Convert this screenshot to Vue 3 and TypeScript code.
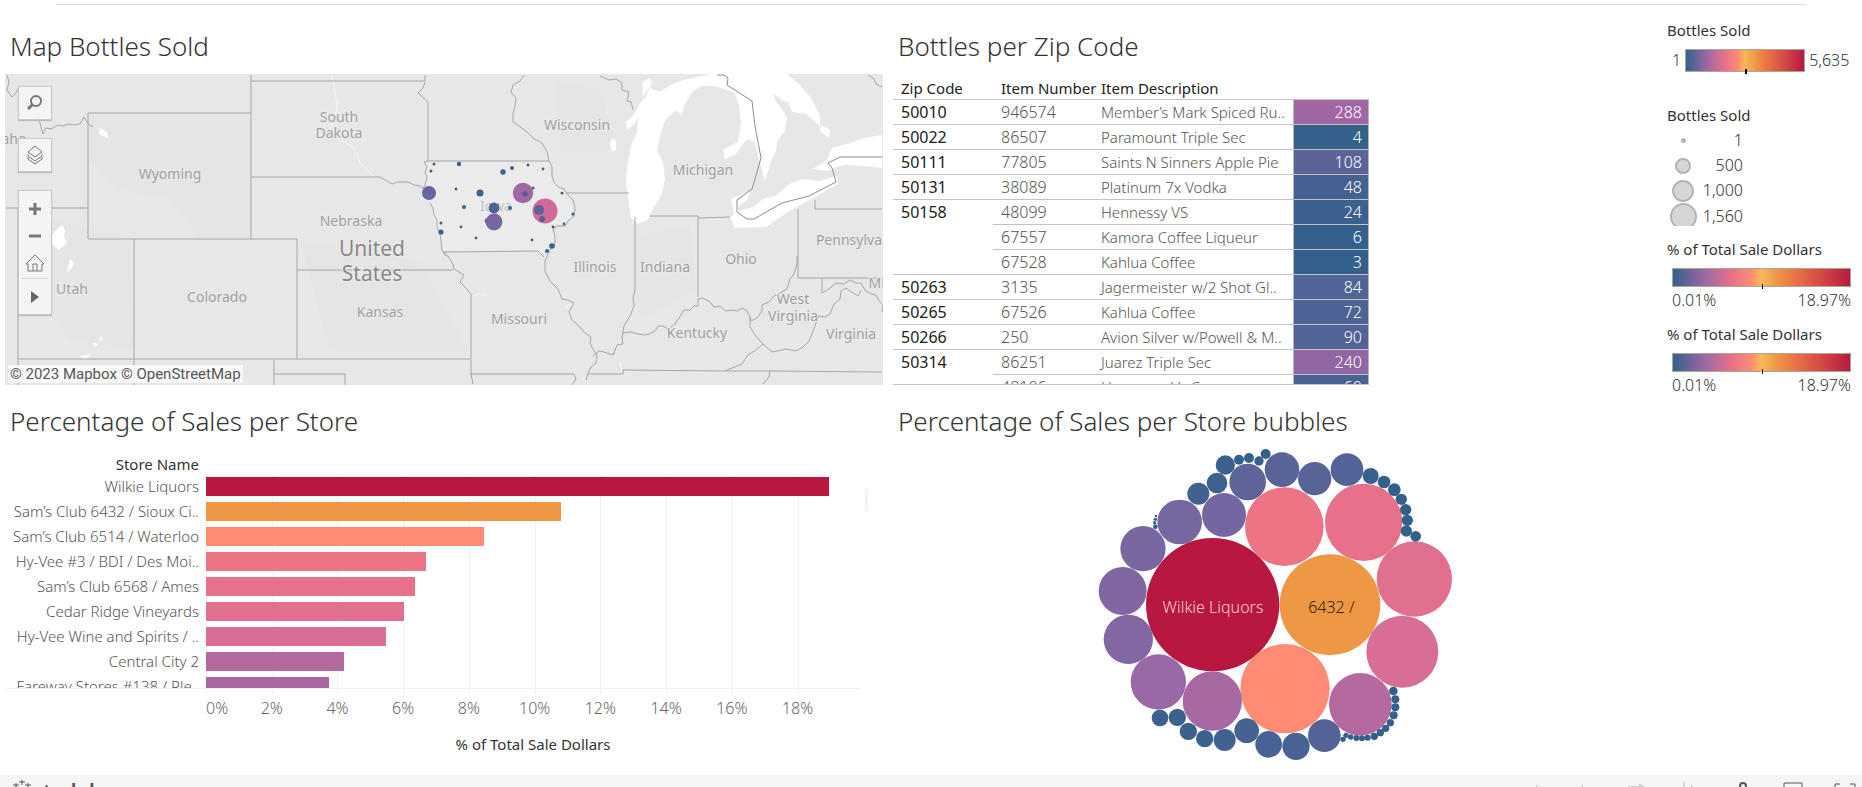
<script setup lang="ts">
interface ZipRow {
  zip?: string
  span?: number
  item: string
  description: string
  bottles: number
  color: string
}

const zipRows: ZipRow[] = [
  { zip: '50010', item: '946574', description: 'Member’s Mark Spiced Ru..', bottles: 288, color: '#a167a4' },
  { zip: '50022', item: '86507', description: 'Paramount Triple Sec', bottles: 4, color: '#34608c' },
  { zip: '50111', item: '77805', description: 'Saints N Sinners Apple Pie', bottles: 108, color: '#5b6499' },
  { zip: '50131', item: '38089', description: 'Platinum 7x Vodka', bottles: 48, color: '#446192' },
  { zip: '50158', span: 3, item: '48099', description: 'Hennessy VS', bottles: 24, color: '#3b618e' },
  { item: '67557', description: 'Kamora Coffee Liqueur', bottles: 6, color: '#34608c' },
  { item: '67528', description: 'Kahlua Coffee', bottles: 3, color: '#34608c' },
  { zip: '50263', item: '3135', description: 'Jagermeister w/2 Shot Gl..', bottles: 84, color: '#526397' },
  { zip: '50265', item: '67526', description: 'Kahlua Coffee', bottles: 72, color: '#4d6295' },
  { zip: '50266', item: '250', description: 'Avion Silver w/Powell & M..', bottles: 90, color: '#546397' },
  { zip: '50314', span: 2, item: '86251', description: 'Juarez Triple Sec', bottles: 240, color: '#9067a4' },
  { item: '48106', description: 'Hennessy Vs Cognac', bottles: 60, color: '#486294' },
]

interface Store {
  name: string
  share: number
  color: string
}

const axisMax = 19.9
const stores: Store[] = [
  { name: 'Wilkie Liquors', share: 18.97, color: '#b8173f' },
  { name: 'Sam’s Club 6432 / Sioux Ci..', share: 10.8, color: '#ee9845' },
  { name: 'Sam’s Club 6514 / Waterloo', share: 8.46, color: '#ff8b74' },
  { name: 'Hy-Vee #3 / BDI / Des Moi..', share: 6.7, color: '#ed7485' },
  { name: 'Sam’s Club 6568 / Ames', share: 6.36, color: '#e7718a' },
  { name: 'Cedar Ridge Vineyards', share: 6.02, color: '#e1708e' },
  { name: 'Hy-Vee Wine and Spirits / ..', share: 5.48, color: '#d86e95' },
  { name: 'Central City 2', share: 4.2, color: '#b5699f' },
  { name: 'Fareway Stores #138 / Ple..', share: 3.74, color: '#a768a2' },
]
const ticks = [0, 2, 4, 6, 8, 10, 12, 14, 16, 18]
const percent = (value: number): string => `${(value / axisMax) * 100}%`

type Dot = [x: number, y: number, r: number, color: string]

const navy = '#34608c'
const bubbles: Dot[] = [
  [398, 494, 200, '#b8173f'], [750, 494, 151, '#ee9845'], [615, 746, 134, '#ff8b74'],
  [613, 260, 118, '#ed7485'], [851, 247, 116, '#e7718a'], [1003, 417, 113, '#e1708e'],
  [967, 635, 108, '#d86e95'], [841, 793, 94, '#b5699f'], [397, 783, 89, '#a768a2'],
  [235, 726, 83, '#9a68a4'], [145, 598, 74, '#8267a2'], [128, 453, 72, '#8067a2'],
  [189, 326, 68, '#7867a1'], [299, 246, 67, '#7767a1'], [432, 225, 66, '#7466a0'],
  [503, 126, 55, '#5e649a'], [606, 89, 52, '#596499'], [704, 116, 50, '#566498'],
  [801, 89, 49, '#546397'], [733, 887, 49, '#546397'], [648, 919, 41, '#486294'],
  [566, 913, 40, '#486294'], [500, 872, 37, '#456293'], [434, 900, 33, '#416290'],
  [374, 896, 26, '#3b618e'], [325, 874, 26, '#3b618e'], [292, 832, 26, '#3b618e'],
  [240, 834, 25, '#3b618e'], [355, 161, 33, '#416290'], [411, 129, 31, '#3f6190'],
  [436, 75, 29, '#3d618f'], [477, 59, 15, navy], [507, 54, 15, navy], [537, 63, 14, navy],
  [557, 42, 15, navy], [872, 108, 24, '#39618e'], [912, 126, 19, navy], [943, 149, 19, navy],
  [964, 178, 17, navy], [977, 209, 17, navy], [982, 241, 17, navy], [979, 273, 17, navy],
  [1007, 289, 16, navy], [228, 228, 4, navy], [226, 238, 5, navy], [224, 248, 5, navy],
  [226, 260, 7, navy], [789, 898, 8, navy], [798, 886, 8, navy], [812, 891, 8, navy],
  [829, 894, 9, navy], [846, 895, 9, navy], [863, 893, 9, navy], [883, 889, 11, navy],
  [901, 878, 11, navy], [917, 865, 11, navy], [931, 848, 11, navy], [941, 826, 12, navy],
  [946, 802, 12, navy], [946, 778, 12, navy], [940, 753, 13, navy],
]

const dot = '#38628f'
const mapDots: Dot[] = [
  [434, 164, 1.5, dot], [431, 171, 1.5, dot], [459, 164, 2.2, dot], [503, 172, 2.7, dot],
  [512, 168, 2, dot], [528, 165, 1.4, dot], [543, 169, 1.4, dot], [456, 189, 1.4, dot],
  [480, 193, 3.5, dot], [464, 207, 2, dot], [510, 208, 2, dot], [533, 188, 1.5, dot],
  [562, 193, 1.5, dot], [573, 214, 1.6, dot], [564, 224, 1.4, dot], [553, 227, 1.4, dot],
  [441, 223, 1.5, dot], [441, 232, 2.6, dot], [461, 227, 1.4, dot], [476, 238, 1.4, dot],
  [532, 240, 1.4, dot], [552, 246, 2.8, dot], [547, 251, 2, dot], [487, 221, 2.4, dot],
  [429, 193, 7, '#65659f'], [494, 208, 5.4, '#4b6397'], [494, 222, 8.4, '#7a66a3'],
  [523, 193, 10.2, '#a167a4'], [525, 194, 2.8, '#5a5d96'], [545, 211, 12.5, '#d26899'],
  [539, 210, 5, '#5b6499'], [542, 219, 3, '#54608f'],
]

const mapLabels: [x: number, y: number, text: string][] = [
  [170, 179, 'Wyoming'], [339, 122, 'South'], [339, 138, 'Dakota'], [351, 226, 'Nebraska'],
  [217, 302, 'Colorado'], [72, 294, 'Utah'], [380, 317, 'Kansas'], [14, 144, 'aho'],
  [577, 130, 'Wisconsin'], [703, 175, 'Michigan'], [595, 272, 'Illinois'],
  [665, 272, 'Indiana'], [741, 264, 'Ohio'], [519, 324, 'Missouri'], [697, 338, 'Kentucky'],
  [793, 304, 'West'], [793, 321, 'Virginia'], [851, 339, 'Virginia'], [859, 245, 'Pennsylvania'], [880, 288, 'MD'],
]

const borders = [
  'M7 75l2 7-2 8 5 7 4-4 3-6 6 5 4 10 9 13 3 12 2 7 3-6 5 1 7-4 5 1 5-2 6 1 6-1 4-7 4 7 5 3',
  'M88 239V113H251M251 75V239M6 208H88M88 239H297V359M134 239V385M18 208V385M18 359H470',
  'M251 81H425V75M425 82l-2 6-5 5 9 8 1 2v58H549M428 161l-4 1 3 5-2 5 2 5-2 8-2 4M251 177H380l5 3 7 4 5-2 11 0 6 3 6 1 5 3',
  'M430 203l3 5 1 7 3 5v7l3 7 1 7 1 9 3 5 3 1 5 8 1 5 10 6-4 7 6 6 5 6V374l2 10M443 252l95-1 6 6M297 270H453',
  'M274 360V385M274 374H345V385M470 374H574l2 5-4 6M447 253H443',
  'M524 75l-4 6-7 4-2 7 5 6-1 8-2 8v8l6 4 8 6 6 6 9 5 5 9 2 9 3 6 0 9 2 6 4 5 6 2 4 6 5 5 2 8-1 8-5 4-4 6-8 0-4 3 2 8 0 7-5 6-5 11 0 10 5 10 8 8 4 10 6 1 6 3-5 9 3 8 8 7 5 6 6 4-1 6 4 8 3 4-1 8-5 4-3 6-2 7',
  'M566 193H629M635 217v73l-2 8 1 8-4 10-6 10-2 11 1 7-6 1-4 10-9-3-5-1-6 5',
  'M623 333l8-1 7 2 7 1 4-1 6-3 3-5 5 0 5 3 6-4 5-7 5-8 6 0 4-4 4 0v-7l5-1 7 4 4 5 6-1 6 5 6-1 5 1 5-3 5 3 3 6 1 4 6-3 5-7 0-6 7-3 5-6 8-4 5-3 3-10 4-5 3-10 0-8',
  'M650 216H698V297M698 218l32-1M798 209V278H882M815 200v9h67M822 278v15l8-5 6-5 8 1 6-4 6 3 5 0 4 7 6 4 5 1 3 6 4 4-1 7',
  'M750 317l0 10 5 8 8 9 9 8 5-1 9-2 10 2 7-4 6-6 4-10 3-8 3-7 6 1 5-3 4-10 6-5 1-8 5-3 4 3 8 5 3-6',
  'M763 344l-7 6-8 5-6 9-17 7M588 374h35v-4l102 1 45 0 112 1M770 371l-1 6-6 7',
  'M600 76l9 4 7-1 6 4 0 7 7 2-2 9 4 1 2 8M868 75l6 4 2 5 6 3',
]
</script>

<template>
  <div class="page">
    <div class="rule"></div>
    <main class="dashboard">
      <section class="panel">
        <h2>Map Bottles Sold</h2>
        <div class="map">
          <svg class="map-canvas" viewBox="5 74 878 311" preserveAspectRatio="xMidYMid slice" role="img" aria-label="Map Bottles Sold">
            <rect x="5" y="74" width="878" height="311" fill="#e7e7e7" />
            <path class="terrain" d="M90 114H250V238H200L170 200 120 190 90 160ZM300 240L420 262 468 350 330 350ZM20 210L130 240 134 350 70 340 30 290ZM640 235L690 225 696 290 640 320ZM555 80L600 90 618 150 560 150Z" />
            <path class="iowa" d="M428 162H549L552 180 562 190 573 207 572 218 553 228 555 237 544 256 538 252H443L430 204 423 188Z" />
            <g class="water">
              <path d="M697 77l-17 4-11 5-9 6-10-4-4 9-5 5-6 11-9 10 1 7 8-7 3-7-1 17-6 13-4 22-1 15 5 35 7 6 9-4 8-14 7-13 3-14-2-16-6-13 3-14 5-16 11-10 5 6 4-12 8-13 8-5 13 0 20 6 5 13 2 18-3 19-15 8 2 9 10-4 12-16 8 3 3 14 7 25 6-20 5-10 1-10 8-10 2-13-6-10-6-8-3-12 14 7 6 17 14 2 14 12 0-10-9-18-12-14-14-11-23-5-29 1-17 4Z" />
              <path d="M612 138l4 3 0 9-4 2-2-8ZM642 82l8-4 2 6-9 12ZM765 87l18-8 14 11 4 17-19-7ZM821 125l9 5-1 8-9-7ZM731 199l19-8-2 8-9 7-4 13ZM730 217l8-6 16-4 9-8 12-3 15-12 12-5 18 2 17-5 1 8-23 13-27 15-22 15-31 1ZM813 169l14-9 5-12 15-4 17-6 18-3v33l-18-2-18-1-10 2-8 4Z" />
              <path d="M58 228l4-3 3 5-1 7 3 6-8 7-7-6-1-8ZM70 259l4 4-3 6-4 3ZM100 128l7 4 1 6-9-4ZM101 335l2 4-4 3ZM93 342l5 2-4 3ZM80 356l12-2-8 6Z" />
              <path class="river" d="M331 76l3 8 1 10 2 7 0 9-4 9-3 12 8 8 8 4 7 4 4 7 3 9 9 9 6 5M474 296l5-2 8 1M565 308l5-4M620 362l2 10M22 86l5 12" />
            </g>
            <path v-for="line in borders" :key="line" class="state-line" :d="line" />
            <path class="country-line" d="M717 75h7l4 3-1 7 25 16 3 25 6 32-6 21-3 10-15 11v12l10 7h7l28-16 27-7 27-14-4-14-4-5 12-6h42" />
            <text v-for="[x, y, label] in mapLabels" :key="`${x}-${y}`" class="map-label" :x="x" :y="y">{{ label }}</text>
            <text class="map-label faint" x="496" y="211">Iowa</text>
            <text class="map-label country" x="372" y="256">United</text>
            <text class="map-label country" x="372" y="281">States</text>
            <circle v-for="[x, y, r, color] in mapDots" :key="`${x}-${y}`" :cx="x" :cy="y" :r="r" :fill="color" />
          </svg>
          <div class="map-tools">
            <button type="button" aria-label="Search">
              <svg width="20" height="20" viewBox="0 0 20 20"><circle cx="11" cy="8" r="5" /><path d="M7 12L3 16" stroke-width="3" /></svg>
            </button>
            <button type="button" aria-label="Map layers">
              <svg width="20" height="20" viewBox="0 0 20 20"><path d="M10 1l7 6-7 5-7-5ZM3 9v2l7 5 7-5V9M3 12v2l7 5 7-5v-2" stroke-width="1" /></svg>
            </button>
            <div class="zoom-tools">
              <button type="button" aria-label="Zoom in">
                <svg width="20" height="20" viewBox="0 0 20 20"><path d="M4 10H16M10 4V16" stroke-width="3" /></svg>
              </button>
              <button type="button" aria-label="Zoom out">
                <svg width="20" height="20" viewBox="0 0 20 20"><path d="M4 10H16" stroke-width="3" /></svg>
              </button>
              <button type="button" aria-label="Zoom home">
                <svg width="20" height="20" viewBox="0 0 20 20"><path d="M1 11l9-9 9 9H17v7H3V11ZM8 18V11h4v7" stroke-width="1" /></svg>
              </button>
              <button type="button" aria-label="Show tools" class="more">
                <svg width="20" height="20" viewBox="0 0 20 20"><path d="M6 4l8 6-8 6Z" fill="#666" stroke="none" /></svg>
              </button>
            </div>
          </div>
          <div class="attribution">
            <a href="#">© 2023 Mapbox</a><a href="#">© OpenStreetMap</a>
          </div>
        </div>
      </section>

      <section class="panel">
        <h2>Bottles per Zip Code</h2>
        <div class="table-view">
          <table>
            <thead>
              <tr>
                <th class="zip">Zip Code</th>
                <th class="item">Item Number</th>
                <th class="description">Item Description</th>
                <th class="bottles"></th>
              </tr>
            </thead>
            <tbody>
              <tr v-for="row in zipRows" :key="row.item">
                <th v-if="row.zip" :rowspan="row.span ?? 1" scope="row" class="zip-value">{{ row.zip }}</th>
                <td>{{ row.item }}</td>
                <td class="name">{{ row.description }}</td>
                <td class="value" :style="{ backgroundColor: row.color }">{{ row.bottles }}</td>
              </tr>
            </tbody>
          </table>
        </div>
      </section>

      <aside class="legends">
        <section class="legend inline-legend">
          <h3>Bottles Sold</h3>
          <div class="ramp-row"><span>1</span><div class="ramp tall"></div><span>5,635</span></div>
        </section>
        <section class="legend size-legend">
          <h3>Bottles Sold</h3>
          <ul>
            <li><i class="size s1"></i><span>1</span></li>
            <li><i class="size s2"></i><span>500</span></li>
            <li><i class="size s3"></i><span>1,000</span></li>
            <li><i class="size s4"></i><span>1,560</span></li>
          </ul>
        </section>
        <section v-for="n in 2" :key="n" class="legend share-legend">
          <h3>% of Total Sale Dollars</h3>
          <div class="ramp"></div>
          <div class="ramp-ends"><span>0.01%</span><span>18.97%</span></div>
        </section>
      </aside>

      <section class="panel">
        <h2>Percentage of Sales per Store</h2>
        <div class="bar-view">
          <div class="store-heading">Store Name</div>
          <div class="bars">
            <div class="gridlines">
              <i v-for="tick in ticks" :key="tick" :style="{ left: percent(tick) }"></i>
            </div>
            <div class="bar-rows">
              <div v-for="store in stores" :key="store.name" class="bar-row">
                <span class="store">{{ store.name }}</span>
                <div class="track"><div class="bar" :style="{ width: percent(store.share), backgroundColor: store.color }"></div></div>
              </div>
            </div>
            <i class="thumb"></i>
          </div>
          <div class="axis">
            <span v-for="tick in ticks" :key="tick" :class="{ first: tick === 0 }" :style="{ left: percent(tick) }">{{ tick }}%</span>
          </div>
          <div class="axis-title">% of Total Sale Dollars</div>
        </div>
      </section>

      <section class="panel">
        <h2>Percentage of Sales per Store bubbles</h2>
        <svg class="bubble-chart" viewBox="0 27 1185 963" role="img" aria-label="Percentage of Sales per Store bubbles">
          <circle v-for="[x, y, r, color] in bubbles" :key="`${x}-${y}`" :cx="x" :cy="y" :r="r" :fill="color" />
          <text x="399" y="518" fill="#f3cfd8">Wilkie Liquors</text>
          <text x="754" y="518" fill="#33230f">6432 /</text>
        </svg>
      </section>
    </main>

    <footer class="toolbar">
      <a href="#" class="brand">
        <svg width="24" height="24" viewBox="0 0 24 24" aria-hidden="true">
          <path d="M11 0v5M8 2h6M5 3v5M2 5h6M17 3v5M14 5h6" />
        </svg>
        <span>tableau</span>
      </a>
      <div class="actions">
        <button type="button" class="faded" aria-label="Undo"><svg viewBox="0 0 24 24"><path d="M17 3L7 13l10 10" /></svg></button>
        <button type="button" class="faded" aria-label="Redo"><svg viewBox="0 0 24 24"><path d="M8 3l10 10L8 23" /></svg></button>
        <button type="button" class="faded" aria-label="Replay"><svg viewBox="0 0 24 24"><path d="M3 5H17M14 2l5 3-5 3" /></svg></button>
        <button type="button" class="faded" aria-label="Revert"><svg viewBox="0 0 24 24"><path d="M7 0v20M16 3L9 10l7 10" /></svg></button>
        <button type="button" aria-label="Share"><svg viewBox="0 0 24 24"><circle cx="14" cy="4" r="3" stroke-width="2" /><path d="M14 8v12" /></svg></button>
        <button type="button" aria-label="Download"><svg viewBox="0 0 24 24"><path d="M3 1H21V18H3ZM12 5v10M8 9l4-4 4 4" /></svg></button>
        <button type="button" aria-label="Full screen"><svg viewBox="0 0 24 24"><path d="M2 6V2H7M17 2h5V6M6 6H18V15H6Z" /></svg></button>
      </div>
    </footer>
  </div>
</template>

<style>
body {
  margin: 0;
  background: #fff;
}
</style>

<style scoped>
.page {
  height: 100vh;
  overflow: hidden;
  font: 300 16px/25px "Noto Sans", "Open Sans", sans-serif;
  color: #333;
}
.rule {
  height: 4px;
  margin: 0 56px 5px;
  border-bottom: 1px solid #d9d9d9;
}
.dashboard {
  display: grid;
  grid-template-columns: minmax(0, 888fr) minmax(0, 779fr) 195px;
  grid-template-rows: 375px 390px;
}
.panel {
  min-width: 0;
  padding: 0 5px;
}
h2 {
  box-sizing: border-box;
  margin: 0;
  padding: 15px 5px 0;
  height: 64px;
  font-size: 26px;
  font-weight: 300;
  line-height: 42px;
  white-space: nowrap;
}
h3 {
  margin: 0;
  font-size: 15px;
  font-weight: 400;
  line-height: 25px;
  white-space: nowrap;
}

.map {
  position: relative;
  height: 311px;
}
.map-canvas {
  display: block;
  width: 100%;
  height: 100%;
}
.terrain { fill: #e5e5e5; }
.iowa { fill: #ebebeb; }
.water path { fill: #fff; }
.water .river { fill: none; stroke: #f7f7f7; stroke-width: 1; }
.state-line { fill: none; stroke: #a6a6a6; stroke-width: 1; }
.country-line { fill: none; stroke: #8c8c8c; stroke-width: 1; }
.map-label {
  font-size: 14px;
  font-weight: 400;
  text-anchor: middle;
  fill: #a0a0a0;
  stroke: #ebebeb;
  stroke-width: 2;
  paint-order: stroke;
}
.map-label.country { font-size: 21px; fill: #888; }
.map-label.faint { fill: #c2c2c2; }
.map-tools {
  position: absolute;
  top: 12px;
  left: 13px;
  display: flex;
  flex-direction: column;
  gap: 18px;
}
.map-tools button {
  display: grid;
  place-items: center;
  width: 34px;
  height: 34px;
  padding: 0;
  background: rgba(245, 245, 245, 0.92);
  border: 1px solid #c8c8c8;
  box-shadow: 0 1px 1px #bbb;
}
.map-tools svg {
  fill: none;
  stroke: #777;
  stroke-width: 2;
}
.zoom-tools {
  display: flex;
  flex-direction: column;
  padding-top: 4px;
  background: rgba(245, 245, 245, 0.92);
  border: 1px solid #c8c8c8;
  box-shadow: 0 1px 1px #bbb;
}
.map-tools .zoom-tools button {
  width: 32px;
  height: 27px;
  background: none;
  border: 0;
  box-shadow: none;
}
.map-tools .zoom-tools .more {
  height: 36px;
  margin: 2px 3px 0;
  width: 26px;
  border-top: 1px solid #ddd;
}
.attribution {
  position: absolute;
  left: 3px;
  bottom: 2px;
  display: flex;
  gap: 4px;
  padding: 0 2px;
  background: rgba(255, 255, 255, 0.75);
  font: 400 15px/18px Roboto, "Open Sans", sans-serif;
}
.attribution a { color: #555; text-decoration: none; }

.table-view {
  height: 310px;
  width: 476px;
  max-width: 100%;
  overflow: hidden;
  border-bottom: 1px solid #c3c3c3;
}
table {
  width: 100%;
  table-layout: fixed;
  border-collapse: separate;
  border-spacing: 0;
}
th, td {
  box-sizing: border-box;
  height: 25px;
  padding: 0 0 0 8px;
  border-bottom: 1px solid #c3c3c3;
  line-height: 24px;
  text-align: left;
  vertical-align: top;
  white-space: nowrap;
  font-weight: 300;
  color: #555;
}
th { font-size: 15px; font-weight: 400; color: #222; }
thead th { height: 26px; padding-top: 4px; line-height: 21px; }
.zip-value { font-size: 16px; }
.name { font-size: 15px; }
.zip, .item { width: 100px; }
.description { width: 200px; }
.bottles { width: 76px; }
td.value {
  padding: 0 6px 0 0;
  border-right: 1px solid #b5b5b5;
  border-left: 1px solid #b5b5b5;
  text-align: right;
  color: #fff;
}

.legends {
  grid-row: span 2;
  padding-top: 8px;
}
.inline-legend { height: 85px; }
.ramp-row {
  display: flex;
  align-items: center;
  gap: 4px;
  padding: 5px 0 0 5px;
}
.ramp {
  position: relative;
  box-sizing: border-box;
  height: 19px;
  margin: 6px 11px 0 5px;
  border: 1px solid #aaa799;
  background: linear-gradient(90deg, #33608c, #9768a5 17%, #e7718a 33%, #ff8a72 44%, #f6ba57 50%, #ee9244 60%, #ed7846 67%, #d54c45 83%, #b81840);
}
.ramp::after {
  content: "";
  position: absolute;
  left: 50%;
  bottom: -3px;
  width: 1px;
  height: 5px;
  background: #000;
}
.ramp.tall {
  width: 120px;
  height: 23px;
  margin: 0;
}
.ramp.tall::after { width: 2px; }
.size-legend { height: 134px; }
ul {
  height: 100px;
  margin: 0;
  padding: 0;
  list-style: none;
}
li {
  display: grid;
  grid-template-columns: 32px 44px;
  align-items: center;
  justify-items: center;
  height: 25px;
  overflow: hidden;
}
li:last-child { height: 23px; }
li span { justify-self: end; line-height: 25px; }
.size {
  box-sizing: border-box;
  border: 2px solid #b3b3b3;
  border-radius: 50%;
  background: #d6d6d6;
}
.s1 { width: 5px; height: 5px; }
.s2 { width: 16px; height: 16px; }
.s3 { width: 22px; height: 22px; }
.s4 { width: 27px; height: 27px; }
.share-legend { height: 85px; }
.ramp-ends {
  display: flex;
  justify-content: space-between;
  padding: 1px 11px 0 5px;
}

.store-heading {
  box-sizing: border-box;
  width: 194px;
  height: 25px;
  padding-top: 5px;
  font-size: 15px;
  line-height: 20px;
  text-align: right;
  font-weight: 400;
}
.bars {
  position: relative;
  height: 215px;
}
.gridlines {
  position: absolute;
  top: 0;
  bottom: -6px;
  left: 201px;
  right: 23px;
}
.gridlines i {
  position: absolute;
  top: 0;
  bottom: 0;
  width: 1px;
  background: #f0f0f0;
}
.bar-rows {
  position: relative;
  height: 100%;
  box-sizing: border-box;
  margin-right: 23px;
  overflow: hidden;
  border-bottom: 1px solid #f0f0f0;
}
.bar-row {
  display: grid;
  grid-template-columns: 194px minmax(0, 1fr);
  gap: 7px;
  align-items: center;
  height: 25px;
}
.store {
  justify-self: end;
  font-size: 15px;
  white-space: nowrap;
  color: #555;
}
.bar { height: 19px; }
.thumb {
  position: absolute;
  right: 15px;
  top: 15px;
  width: 3px;
  height: 22px;
  background: #f2f2f2;
}
.axis {
  position: relative;
  height: 40px;
  margin: 6px 23px 0 201px;
  color: #666;
}
.axis span {
  position: absolute;
  top: 1px;
  transform: translateX(-50%);
}
.axis .first { transform: none; }
.axis-title {
  margin: 0 23px 0 201px;
  font-size: 15px;
  line-height: 18px;
  text-align: center;
  font-weight: 400;
}
.bubble-chart {
  display: block;
  height: 321px;
  max-width: 100%;
  margin: 0 auto;
}
.bubble-chart text {
  font-size: 48px;
  font-weight: 300;
  text-anchor: middle;
}

.toolbar {
  display: flex;
  justify-content: space-between;
  height: 40px;
  background: #f5f5f5;
}
.brand {
  display: flex;
  gap: 7px;
  padding: 5px 0 0 11px;
  color: #555;
  font-size: 30px;
  font-weight: 400;
  line-height: 30px;
  text-decoration: none;
}
.brand svg, .actions svg {
  fill: none;
  stroke: #555;
}
.actions {
  display: flex;
  gap: 24px;
  padding: 6px 3px 0 0;
}
.actions button {
  padding: 0;
  width: 28px;
  height: 28px;
  border: 0;
  background: none;
}
.actions svg { width: 24px; height: 24px; }
.actions .faded svg { stroke: #b5b5b5; }
</style>
